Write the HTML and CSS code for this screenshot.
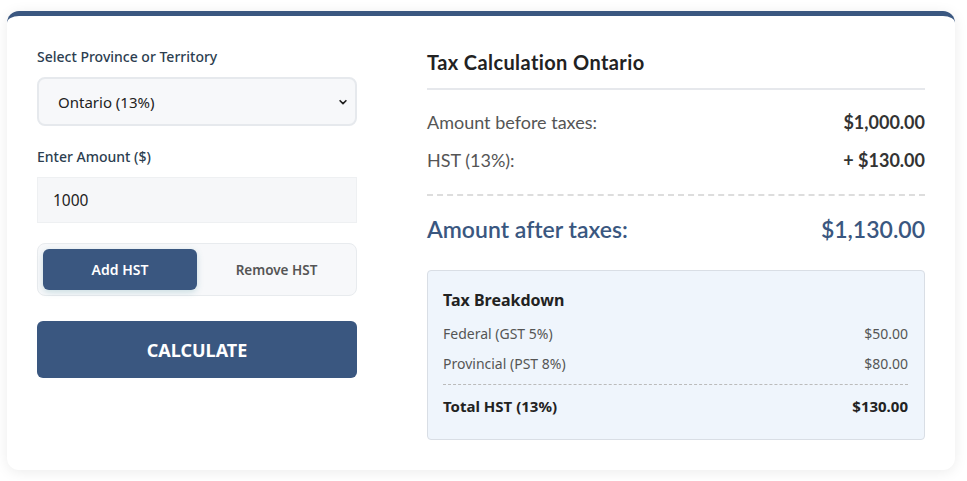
FILE: index.html
```html
<!DOCTYPE html>
<html>
<head>
  <link rel="stylesheet" href="styles.css">
</head>
<body>
  <div class="page">
    <div class="calculator">
      <div class="calc-form">
        <label class="field-label" for="province">Select Province or Territory</label>
        <select id="province" class="field-select">
          <option value="ON" selected>Ontario (13%)</option>
          <option value="NS">Nova Scotia (15%)</option>
          <option value="NB">New Brunswick (15%)</option>
        </select>

        <label class="field-label" for="amount">Enter Amount ($)</label>
        <input type="text" id="amount" class="field-input" value="1000">

        <div class="mode-toggle">
          <button class="mode-button active">Add HST</button>
          <button class="mode-button">Remove HST</button>
        </div>

        <button class="calc-button">CALCULATE</button>
      </div>

      <div class="calc-result">
        <div class="result-title">Tax Calculation Ontario</div>

        <div class="result-row">
          <span>Amount before taxes:</span>
          <span class="result-value">$1,000.00</span>
        </div>
        <div class="result-row">
          <span>HST (13%):</span>
          <span class="result-value">+ $130.00</span>
        </div>

        <div class="result-total">
          <span>Amount after taxes:</span>
          <span>$1,130.00</span>
        </div>

        <div class="breakdown">
          <div class="breakdown-title">Tax Breakdown</div>
          <div class="breakdown-row">
            <span>Federal (GST 5%)</span>
            <span>$50.00</span>
          </div>
          <div class="breakdown-row">
            <span>Provincial (PST 8%)</span>
            <span>$80.00</span>
          </div>
          <div class="breakdown-row breakdown-total">
            <span>Total HST (13%)</span>
            <span>$130.00</span>
          </div>
        </div>
      </div>
    </div>
  </div>
</body>
</html>
```

FILE: styles.css
```css
body {
  margin: 0;
  padding: 0;
  background-color: #ffffff;
  font-family: 'Noto Sans', 'Open Sans', sans-serif;
  color: #222222;
}

.page {
  padding: 11px 12px 10px 7px;
}

.calculator {
  display: grid;
  grid-template-columns: 320px 1fr;
  gap: 70px;
  padding: 31px 30px 30px 30px;
  background-color: #ffffff;
  border-top: 5px solid #3a5780;
  border-radius: 12px;
  box-shadow: 0 2px 14px rgba(0, 0, 0, 0.08);
}

/* left side */

.calc-form {
  display: flex;
  flex-direction: column;
}

.field-label {
  display: block;
  font-size: 14px;
  font-weight: 500;
  line-height: 20px;
  color: #2c3e50;
  margin-bottom: 10px;
}

.field-select {
  height: 49px;
  padding: 0 12px 0 19px;
  margin-bottom: 21px;
  font-family: 'Noto Sans', sans-serif;
  font-size: 15px;
  color: #222222;
  background-color: #f7f8fa;
  border: 2px solid #e6e9ed;
  border-radius: 8px;
  appearance: none;
  background-image: url("data:image/svg+xml,%3Csvg xmlns='http://www.w3.org/2000/svg' width='10' height='10' viewBox='0 0 24 24' fill='none' stroke='%23222' stroke-width='4' stroke-linecap='round' stroke-linejoin='round'%3E%3Cpolyline points='5 9 12 16 19 9'%3E%3C/polyline%3E%3C/svg%3E");
  background-repeat: no-repeat;
  background-position: right 7px center;
}

.field-input {
  height: 46px;
  box-sizing: border-box;
  padding: 0 15px;
  margin-bottom: 20px;
  font-family: 'Noto Sans', sans-serif;
  font-size: 15.5px;
  color: #222222;
  background-color: #f6f7f9;
  border: 1px solid #eef0f2;
  border-radius: 0;
}

.mode-toggle {
  display: flex;
  gap: 5px;
  padding: 5px;
  margin-bottom: 25px;
  background-color: #f7f8fa;
  border: 1px solid #e8ebee;
  border-radius: 8px;
}

.mode-button {
  flex: 1;
  height: 41px;
  font-family: 'Noto Sans', sans-serif;
  font-size: 13.5px;
  font-weight: 600;
  color: #555555;
  background: none;
  border: none;
  border-radius: 6px;
  cursor: pointer;
}

.mode-button.active {
  flex: 0 0 154px;
  font-size: 14px;
  color: #ffffff;
  background-color: #3a5780;
  box-shadow: 0 2px 6px rgba(58, 140, 150, 0.25);
}

.calc-button {
  height: 57px;
  font-family: 'Noto Sans', sans-serif;
  font-size: 18px;
  font-weight: 700;
  color: #ffffff;
  background-color: #3a5780;
  border: none;
  border-radius: 6px;
  cursor: pointer;
}

/* right side */

.calc-result {
  font-family: 'Lato', sans-serif;
  font-variant-ligatures: none;
}

.result-title {
  font-size: 20px;
  font-weight: 700;
  letter-spacing: 0.4px;
  line-height: 30px;
  color: #222222;
  padding-bottom: 11px;
  border-bottom: 2px solid #e6e8ec;
  margin-bottom: 13px;
}

.result-row {
  display: flex;
  justify-content: space-between;
  font-size: 18px;
  line-height: 24px;
  padding: 7px 0;
  color: #555555;
}

.result-value {
  font-weight: 700;
  color: #333333;
}

.result-total {
  display: flex;
  justify-content: space-between;
  margin-top: 15px;
  padding-top: 18px;
  border-top: 2px dashed #dddddd;
  font-size: 23px;
  font-weight: 600;
  line-height: 30px;
  color: #3a5780;
}

.breakdown {
  margin-top: 26px;
  padding: 18px 16px 18px 15px;
  background-color: #eff5fc;
  border: 1px solid #d9dee5;
  border-radius: 4px;
  font-family: 'Noto Sans', sans-serif;
}

.breakdown-title {
  font-size: 16px;
  font-weight: 700;
  line-height: 22px;
  color: #222222;
  margin-bottom: 8px;
}

.breakdown-row {
  display: flex;
  justify-content: space-between;
  font-size: 14px;
  line-height: 30px;
  color: #555555;
}

.breakdown-total {
  margin-top: 5px;
  padding-top: 6px;
  border-top: 1px dashed #bbbbbb;
  font-size: 15px;
  font-weight: 700;
  color: #222222;
}
```
